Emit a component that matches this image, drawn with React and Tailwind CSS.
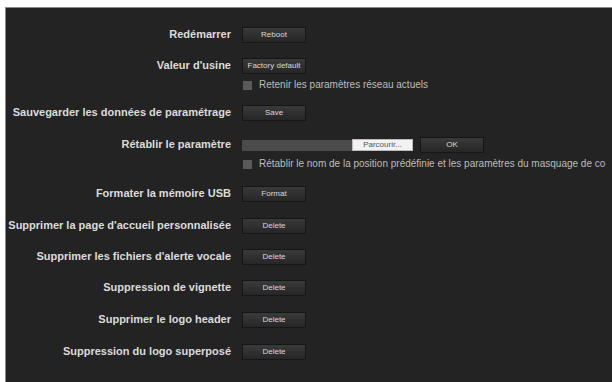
import React from 'react';

const Btn = ({ children, className = '' }) => (
  <button
    type="button"
    className={`w-[64px] h-[16px] border border-[#161616] bg-gradient-to-b from-[#3a3a3a] to-[#262626] text-[8px] leading-none text-[#d8d8d8] ${className}`}
  >
    {children}
  </button>
);

const Check = ({ children }) => (
  <div className="flex items-center gap-[7px] mt-[6px] whitespace-nowrap">
    <span className="w-[9px] h-[9px] bg-[#5a5a5a] shrink-0 ml-[1px]" />
    <span className="text-[10px] text-[#bdbdbd] leading-none">{children}</span>
  </div>
);

const Row = ({ label, mt, children }) => (
  <div className="flex items-start" style={{ marginTop: mt }}>
    <div className="w-[226px] shrink-0 text-right pr-[1px] pt-[1px] text-[11px] font-bold leading-[12px] text-[#dcdcdc] whitespace-nowrap">
      {label}
    </div>
    <div className="ml-[10px] flex flex-col min-w-0">{children}</div>
  </div>
);

export default function App() {
  return (
    <div className="w-[612px] h-[382px] bg-white pt-[7px] pl-[5px] overflow-hidden" style={{ fontFamily: '"Liberation Sans", Arial, sans-serif' }}>
      <div className="h-full border-l border-t border-[#8a8a8a] bg-[#232323] overflow-hidden">
        <Row label="Redémarrer" mt={19}>
          <Btn>Reboot</Btn>
        </Row>
        <Row label="Valeur d'usine" mt={15}>
          <Btn>Factory default</Btn>
          <Check>Retenir les paramètres réseau actuels</Check>
        </Row>
        <Row label="Sauvegarder les données de paramétrage" mt={15}>
          <Btn>Save</Btn>
        </Row>
        <Row label="Rétablir le paramètre" mt={16}>
          <div className="flex items-center">
            <div className="w-[110px] h-[11px] bg-[#4b4b4b]" />
            <div className="w-[61px] h-[12px] bg-[#f2f2f2] border border-[#bbb] text-[8px] leading-[10px] text-[#555] text-center">Parcourir...</div>
            <Btn className="ml-[7px] h-[15px]">OK</Btn>
          </div>
          <Check>Rétablir le nom de la position prédéfinie et les paramètres du masquage de co</Check>
        </Row>
        <Row label="Formater la mémoire USB" mt={17}>
          <Btn>Format</Btn>
        </Row>
        <Row label="Supprimer la page d'accueil personnalisée" mt={16}>
          <Btn>Delete</Btn>
        </Row>
        <Row label="Supprimer les fichiers d'alerte vocale" mt={15}>
          <Btn>Delete</Btn>
        </Row>
        <Row label="Suppression de vignette" mt={15}>
          <Btn>Delete</Btn>
        </Row>
        <Row label="Supprimer le logo header" mt={16}>
          <Btn>Delete</Btn>
        </Row>
        <Row label="Suppression du logo superposé" mt={16}>
          <Btn>Delete</Btn>
        </Row>
      </div>
    </div>
  );
}
